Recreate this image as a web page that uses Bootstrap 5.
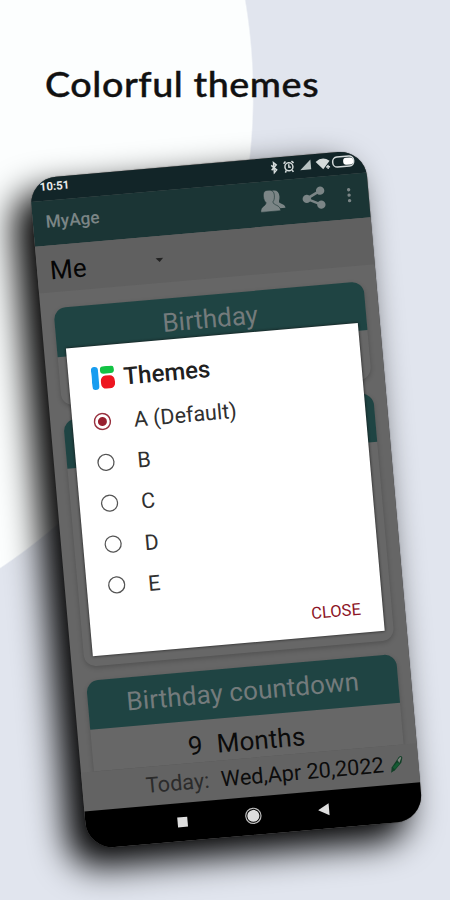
<!DOCTYPE html>
<html lang="en">

<head>
    <meta charset="UTF-8" />
    <meta name="viewport" content="width=device-width, initial-scale=1" />
    <title>Colorful themes</title>
    <link href="https://cdn.jsdelivr.net/npm/bootstrap@5.3.3/dist/css/bootstrap.min.css" rel="stylesheet" />
    <style>
        body {
            font-family: Roboto, "Liberation Sans", sans-serif;
            background-color: #e1e5ee;
        }

        .promo {
            width: 450px;
            height: 900px;
            background: radial-gradient(circle at -315.6px 95px, #fcfefe 568px, #e1e5ee 569.5px);
        }

        .promo-title {
            font-family: Lato, sans-serif;
            font-size: 34.5px;
            line-height: 44px;
            font-weight: 500;
            letter-spacing: .5px;
            padding: 62px 0 0;
            margin: 0 0 0 45px;
            height: 178.8px;
            color: #111;
            -webkit-text-stroke: .4px #111;
            transform: scaleX(1.094);
            transform-origin: 0 0;
        }

        .phone {
            width: 336.5px;
            height: 673px;
            margin-left: 28.6px;
            border-radius: 27px;
            background-color: #666;
            transform: rotate(-5deg);
            transform-origin: 0 0;
            box-shadow: 0 0 1px #222, -17px 16px 35px 2px #000;
        }

        .phone-screen { border-radius: 27px; }

        .status-bar {
            height: 23px;
            background-color: #122528;
            color: #e8eaea;
            padding: 0 10px 3px;
            font-size: 11.5px;
            font-weight: 700;
        }

        .app-bar {
            height: 45px;
            background-color: #1b3535;
            color: #7b8586;
            padding: 0 17px 4px 13px;
        }

        .app-name {
            font-size: 17.2px;
            font-weight: 500;
            padding-top: 3px;
        }

        .more-icon { margin-left: 21px; }

        .person-row {
            height: 47px;
            background-color: #606060;
            padding: 4px 0 0 13px;
            font-size: 26px;
            color: #050505;
        }

        .caret-icon { margin: 0 0 2px 69px; }

        .app-body {
            height: 481px;
            padding: 15.5px 13px 0;
        }

        .age-card {
            border-radius: 12px;
            background-color: #676767;
            box-shadow: 0 2px 5px rgba(0, 0, 0, .2);
        }

        .age-head {
            height: 49px;
            border-radius: 12px 12px 0 0;
            background-color: #1f4443;
            color: #747b7c;
            font-size: 26px;
            line-height: 48px;
        }

        .card-birth { height: 98px; margin-bottom: 14px; }
        .card-age { height: 248px; margin-bottom: 14px; }

        .card-next {
            height: 91.5px;
            border-radius: 12px 12px 0 0;
            letter-spacing: .12px;
        }

        .countdown {
            height: 42.5px;
            font-size: 26px;
            line-height: 50px;
            padding-left: 96px;
            column-gap: 14px;
            color: #0b0b0b;
        }

        .today-row {
            height: 38.5px;
            background-color: #636363;
            padding: 0 14px 0 63.5px;
            font-size: 21.7px;
            line-height: 40px;
            color: #0c0c0c;
        }

        .today-label { color: #2b2b2b; width: 75.5px; }
        .today-date { width: 165px; }

        .soft-keys {
            height: 38.5px;
            background-color: #000;
            column-gap: 55.5px;
        }

        .theme-dialog {
            left: 22px;
            top: 172px;
            width: 293px;
            height: 309px;
            background-color: #fff;
            box-shadow: 0 0 3px #111;
            padding: 20px 22px 0 21px;
            color: #202020;
        }

        .dialog-head {
            height: 25px;
            font-size: 24px;
            font-weight: 500;
            column-gap: 9px;
            padding-left: 2px;
        }

        .theme-list { margin-top: 10px; }

        .theme-item {
            height: 41.2px;
            font-size: 21.5px;
            column-gap: 22.5px;
            color: #303030;
        }

        .theme-item span { padding-top: 3px; }

        .close-btn {
            margin-top: 13.5px;
            font-size: 16.5px;
            color: #8c1426;
        }
    </style>
</head>

<body>

    <main class="promo overflow-hidden">
        <h1 class="promo-title text-nowrap">Colorful themes</h1>

        <div class="phone position-relative">
            <div class="phone-screen w-100 h-100 overflow-hidden">

                <!-- Status bar -->
                <div class="status-bar d-flex justify-content-between align-items-center">
                    <span>10:51</span>
                    <svg width="90" height="14" viewBox="0 0 90 14" fill="none" stroke="#d5dbdb" stroke-width="1.5">
                        <path d="M5.500 4.500l5 5-2.500 2.500v-10l2.500 2.500-5 5" />
                        <circle cx="23" cy="7.500" r="4" />
                        <path d="M23 5v3h2M18 4l2-2M28 4l-2-2M20 11l-1 2M26 11l1 2" />
                        <path d="M45 2v10H34z" fill="#b8c2c2" stroke="none" />
                        <path d="M50 5q7-5.500 14 0l-7 8z" fill="#d5dbdb" stroke="none" />
                        <path d="M60 11h4M62 9v4" />
                        <rect x="67" y="2" width="21" height="10" rx="4.500" />
                        <rect x="77.500" y="3.500" width="10" height="7" rx="3" fill="#fff" stroke="none" />
                    </svg>
                </div>

                <!-- App bar -->
                <div class="app-bar d-flex align-items-center">
                    <span class="app-name me-auto">MyAge</span>
                    <svg width="26" height="23" viewBox="0 0 26 23" fill="currentColor">
                        <path d="M13 1c4-1 7 1 7 6 0 3-1 4-1 6 1 2 6 2 6 6h-9l-4-6z" />
                        <path d="M9 0c4.500 0 6 2 6 6 0 3-1 5-2 6 0 4 7 3 7 9.500H0c0-6.500 6-5.500 6-9.500-1-1-2-3-2-6 0-4 1-6 5-6z" stroke="#1b3535" stroke-width=".6" />
                    </svg>
                    <svg class="ms-3" width="24" height="24" viewBox="0 0 24 24" fill="currentColor">
                        <path d="M19 5L5 12l14 7" fill="none" stroke="currentColor" stroke-width="2.600" />
                        <circle cx="19" cy="5" r="4.200" />
                        <circle cx="5" cy="12" r="4.200" />
                        <circle cx="19" cy="19" r="4.200" />
                    </svg>
                    <svg class="more-icon" width="5" height="18" viewBox="0 0 5 18" fill="currentColor">
                        <circle cx="2.500" cy="3.500" r="1.700" />
                        <circle cx="2.500" cy="9" r="1.700" />
                        <circle cx="2.500" cy="14.500" r="1.700" />
                    </svg>
                </div>

                <!-- Selected person -->
                <div class="person-row d-flex align-items-center">
                    <span>Me</span>
                    <svg class="caret-icon" width="8" height="5" viewBox="0 0 8 5" fill="#222">
                        <path d="M0 0h8L4 4z" />
                    </svg>
                </div>

                <!-- Cards -->
                <div class="app-body">
                    <section class="age-card card-birth">
                        <div class="age-head text-center">Birthday</div>
                    </section>
                    <section class="age-card card-age">
                        <div class="age-head"></div>
                    </section>
                    <section class="age-card card-next">
                        <div class="age-head text-center">Birthday countdown</div>
                        <div class="countdown d-flex">
                            <span>9</span>
                            <span>Months</span>
                        </div>
                    </section>
                </div>

                <div class="today-row d-flex align-items-center text-nowrap">
                    <span class="today-label">Today:</span>
                    <span class="today-date">Wed,Apr 20,2022</span>
                    <svg class="ms-1" width="15" height="18" viewBox="0 0 15 18">
                        <path d="M1 17l1-5 8-10q3-2 3.500 1l-1.500 5-7 7z" fill="#123f27" />
                        <path d="M8.500 5l3-3 1 1-2.500 5z" fill="#7b827c" />
                        <path d="M3 12l5-5 2.500 2-5.500 5z" fill="#145a32" />
                    </svg>
                </div>

                <!-- Android keys -->
                <div class="soft-keys d-flex justify-content-center align-items-center">
                    <svg width="14" height="18" viewBox="0 0 14 18"><path d="M2 4h10v10H2z" fill="#dedede" /></svg>
                    <svg width="18" height="18" viewBox="0 0 18 18">
                        <circle cx="9" cy="9" r="7.600" fill="none" stroke="#bbb" stroke-width="1.200" />
                        <circle cx="9" cy="9" r="6" fill="#dedede" />
                    </svg>
                    <svg width="14" height="18" viewBox="0 0 14 18"><path d="M11 3v12L0 9z" fill="#dedede" /></svg>
                </div>
            </div>

            <!-- Theme picker -->
            <div class="theme-dialog position-absolute" role="dialog">
                <div class="dialog-head d-flex align-items-center">
                    <svg width="23" height="23" viewBox="0 0 23 23">
                        <rect x="0" y="0" width="7" height="23" rx="3.500" fill="#189df0" />
                        <rect x="9" y="0" width="14" height="7.500" rx="3.500" fill="#12c344" />
                        <rect x="9" y="9.500" width="14" height="13" rx="5" fill="#ed1620" />
                    </svg>
                    <span>Themes</span>
                </div>
                <div class="theme-list">
                    <div class="theme-item d-flex align-items-center">
                        <svg width="18" height="18" viewBox="0 0 18 18">
                            <circle cx="9" cy="9" r="8" fill="none" stroke="#98303e" stroke-width="1.500" />
                            <circle cx="9" cy="9" r="4.500" fill="#98202f" />
                        </svg>
                        <span>A (Default)</span>
                    </div>
                    <div class="theme-item d-flex align-items-center">
                        <svg width="18" height="18"><circle cx="9" cy="9" r="8" fill="none" stroke="#555" stroke-width="1.300" /></svg>
                        <span>B</span>
                    </div>
                    <div class="theme-item d-flex align-items-center">
                        <svg width="18" height="18"><circle cx="9" cy="9" r="8" fill="none" stroke="#555" stroke-width="1.300" /></svg>
                        <span>C</span>
                    </div>
                    <div class="theme-item d-flex align-items-center">
                        <svg width="18" height="18"><circle cx="9" cy="9" r="8" fill="none" stroke="#555" stroke-width="1.300" /></svg>
                        <span>D</span>
                    </div>
                    <div class="theme-item d-flex align-items-center">
                        <svg width="18" height="18"><circle cx="9" cy="9" r="8" fill="none" stroke="#555" stroke-width="1.300" /></svg>
                        <span>E</span>
                    </div>
                </div>
                <div class="close-btn text-end">CLOSE</div>
            </div>
        </div>
    </main>

    <script src="https://cdn.jsdelivr.net/npm/bootstrap@5.3.3/dist/js/bootstrap.bundle.min.js"></script>
</body>

</html>
